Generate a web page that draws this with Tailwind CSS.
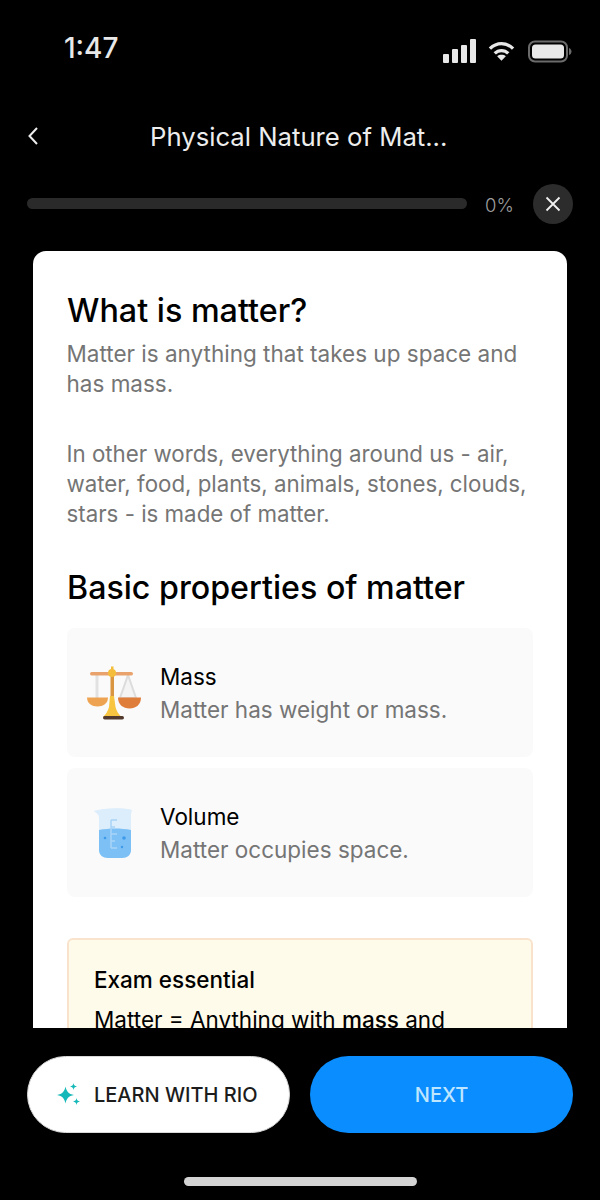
<!DOCTYPE html>
<html><head><meta charset="utf-8"><script src="https://cdn.jsdelivr.net/npm/@tailwindcss/browser@4"></script></head>
<body class="bg-black">
<div class="w-[600px] h-[1200px] bg-black flex flex-col overflow-hidden font-['Inter',sans-serif]">
  <div class="h-[100px] shrink-0 flex items-start justify-between pt-[30px] pl-[64px] pr-[28px]">
    <span class="text-[28px] leading-[36px] font-medium text-[#e8e8e8]">1:47</span>
    <div class="flex items-center gap-[12px] pt-[9px]">
      <svg width="33" height="24" viewBox="0 0 33 24" fill="#e8e8e8"><rect x="0" y="15" width="6" height="9" rx="1"/><rect x="9" y="10" width="6" height="14" rx="1"/><rect x="18" y="6" width="6" height="18" rx="1"/><rect x="27" y="0" width="6" height="24" rx="1"/></svg>
      <svg width="27" height="22" viewBox="0 0 28 22" fill="none" stroke="#e8e8e8" stroke-width="3.4"><path d="M2 8.500C9 1.500 19 1.500 26 8.500"/><path d="M7 13.500C11 9.500 17 9.500 21 13.500"/><path d="M14 21l-4.500-4.500C12 14.500 16 14.500 18.500 16.500Z" fill="#e8e8e8" stroke="none"/></svg>
      <svg width="44" height="23" viewBox="0 0 44 22" fill="none" class="ml-[1px]"><rect x="1" y="1" width="38" height="20" rx="6" stroke="#6b6b6b" stroke-width="2"/><rect x="4" y="4" width="32" height="14" rx="3.500" fill="#e8e8e8"/><path d="M41 7.500c1.500.5 2.500 2 2.500 3.500s-1 3-2.500 3.500z" fill="#6b6b6b"/></svg>
    </div>
  </div>
  <div class="h-[72px] shrink-0 flex items-center pl-[27px]">
    <svg width="12" height="20" viewBox="0 0 12 20" fill="none" stroke="#ededed" stroke-width="2"><path d="M10 2L2.500 10l7.500 8"/></svg>
    <span class="ml-[111px] mt-[2px] text-[25.700px] leading-[32px] text-[#ededed] whitespace-nowrap">Physical Nature of Mat...</span>
  </div>
  <div class="h-[79px] shrink-0 flex items-start pl-[27px] pt-[12px]">
    <div class="w-[440px] h-[11px] mt-[14px] rounded-full bg-[#2a2a2a]"></div>
    <span class="ml-[18px] mt-[8px] w-[48px] text-[18.500px] leading-[26px] font-light text-[#9e9e9e]">0%</span>
    <div class="w-[40px] h-[40px] rounded-full bg-[#2c2c2c] flex items-center justify-center">
      <svg width="16" height="16" viewBox="0 0 16 16" fill="none" stroke="#f0f0f0" stroke-width="1.800"><path d="M1.500 1.500l13 13M14.500 1.500l-13 13"/></svg>
    </div>
  </div>
  <div class="mx-[33px] h-[777px] shrink-0 bg-white rounded-t-[13px] overflow-hidden pl-[34px] pr-[34px] pt-[40px]">
    <h1 class="text-[32.300px] leading-[40px] font-medium text-black">What is matter?</h1>
    <p class="-ml-[0.5px] text-[22.500px] leading-[30px] text-[#757575] mt-[8px]">Matter is anything that takes up space and has mass.</p>
    <p class="-ml-[0.5px] text-[22.300px] leading-[30px] text-[#757575] mt-[40px]">In other words, everything around us - air, water, food, plants, animals, stones, clouds, stars - is made of matter.</p>
    <h2 class="text-[32.200px] leading-[40px] font-medium text-black mt-[39px]">Basic properties of matter</h2>
    <div class="mt-[20px] h-[129px] rounded-[8px] bg-[#fafafa] flex items-center pl-[19px]">
      <svg width="56" height="56" viewBox="0 0 56 56" class="shrink-0">
        <path d="M11 9v24" stroke="#e2e2e2" stroke-width="3" fill="none"/>
        <path d="M42 10l-8 23h16z" fill="#f4f4f4" stroke="#dcdcdc" stroke-width="2"/>
        <rect x="4" y="7" width="43" height="3.500" rx="1.700" fill="#e9a26b"/>
        <path d="M1 32.500h21c0 6-5 9-10.500 9S1 38.500 1 32.500z" fill="#eea352"/>
        <path d="M32 32.500h23c0 7-5 11-11.500 11S32 39.500 32 32.500z" fill="#df7d3a"/>
        <rect x="24.500" y="8" width="3.500" height="26" fill="#d9953f"/>
        <circle cx="26" cy="8" r="4" fill="#f5bd3c"/><rect x="25" y="1.500" width="2.500" height="5" fill="#f5bd3c"/>
        <path d="M24 31h4l1.500 11c1 4 3 7 6 10H17c3-3 5-6 6-10z" fill="#f7c53f"/>
        <rect x="17" y="51" width="21" height="3.500" rx="1.700" fill="#51392e"/>
      </svg>
      <div class="ml-[18px]">
        <div class="text-[22.500px] leading-[33px] text-black">Mass</div>
        <div class="text-[22.500px] leading-[33px] text-[#757575]">Matter has weight or mass.</div>
      </div>
    </div>
    <div class="mt-[11px] h-[129px] rounded-[8px] bg-[#fafafa] flex items-center pl-[26px]">
      <svg width="40" height="52" viewBox="0 0 40 52" class="shrink-0">
        <path d="M1 4C7 1 33 0 39 3c-.5 2-1 3-1 5v35c0 5-4 8-9 8H15c-5 0-9-3-9-8V11C6 7 3 6 1 4z" fill="#dcedfb"/>
        <path d="M6 23c10-2 22-2 32 0v20c0 5-4 8-9 8H15c-5 0-9-3-9-8z" fill="#7cc0f5"/>
        <path d="M18 13h6M18 13v28M18 20h4M18 27h6M18 34h4M18 41h6" stroke="#a8d4f7" stroke-width="1.500" fill="none"/>
        <circle cx="12" cy="31" r="1.300" fill="#3f9bea"/><circle cx="31" cy="31" r="1.800" fill="#3f9bea"/><circle cx="29" cy="40" r="1.200" fill="#3f9bea"/>
      </svg>
      <div class="ml-[27px]">
        <div class="text-[22.500px] leading-[33px] text-black">Volume</div>
        <div class="text-[22.500px] leading-[33px] text-[#757575]">Matter occupies space.</div>
      </div>
    </div>
    <div class="mt-[41px] h-[200px] rounded-[6px] bg-[#fffbeb] border-2 border-[#f9e3cc] px-[25px] pt-[23px]">
      <div class="text-[22.500px] leading-[34px] font-medium text-black">Exam essential</div>
      <div class="text-[22.500px] leading-[34px] text-black mt-[6px] whitespace-nowrap">Matter = Anything with <span class="font-medium">mass</span> and</div>
    </div>
  </div>
  <div class="flex gap-[20px] px-[27px] pt-[28px]">
    <div class="w-[263px] h-[77px] rounded-full bg-white border border-[#d9d9d9] flex items-center pl-[29px]">
      <svg width="24" height="24" viewBox="0 0 24 24" fill="#14b8b8"><path d="M8.500 3.500c1 5 3 7.500 8.500 8.500-5.500 1-7.500 3.500-8.500 8.500C7.500 15.500 5.500 13 0 12c5.500-1 7.500-3.500 8.500-8.500z"/><path d="M16.500 0c.4 2.200 1.300 3.100 3.500 3.500-2.200.4-3.100 1.300-3.500 3.500-.4-2.200-1.300-3.100-3.500-3.500 2.200-.4 3.100-1.300 3.500-3.500z"/><path d="M19.500 15c.4 2.200 1.200 3.100 3.500 3.500-2.300.4-3.100 1.300-3.500 3.500-.4-2.200-1.300-3.100-3.500-3.500 2.200-.4 3.100-1.300 3.500-3.500z"/></svg>
      <span class="ml-[13px] mt-[1px] text-[20px] leading-[26px] font-medium text-[#1c1c1c] whitespace-nowrap">LEARN WITH RIO</span>
    </div>
    <div class="w-[263px] h-[77px] rounded-full bg-[#0a8dff] flex items-center justify-center">
      <span class="mt-[1px] text-[20px] leading-[26px] font-medium text-[#bfe6ff]">NEXT</span>
    </div>
  </div>
  <div class="mt-[44px] mx-auto w-[233px] h-[9px] rounded-full bg-[#d4d4d4]"></div>
</div>
</body></html>
